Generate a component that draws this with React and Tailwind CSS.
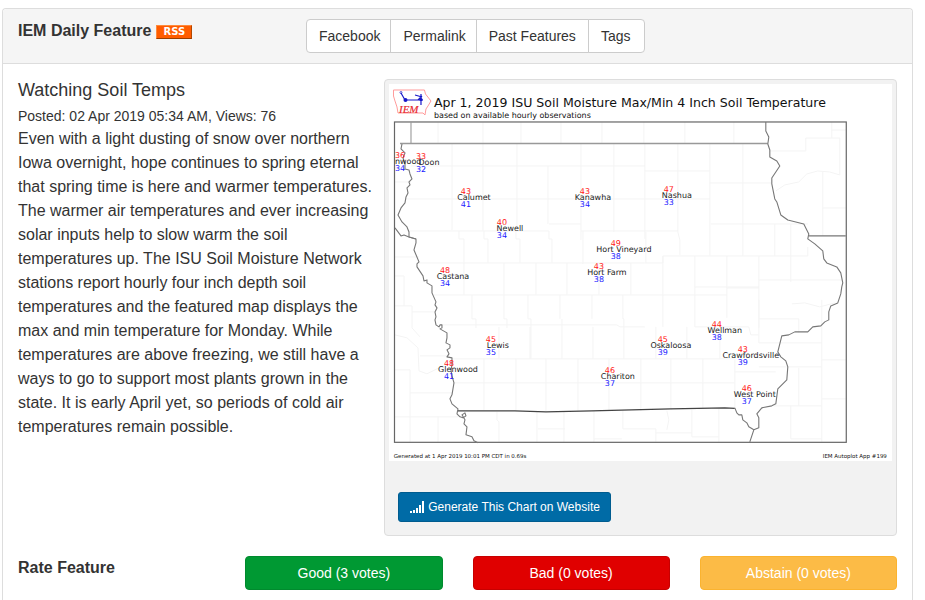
const links = [
  { label: "Facebook", pad: "pr-2.5" },
  { label: "Permalink", pad: "pr-2.5" },
  { label: "Past Features", pad: "pr-3" },
  { label: "Tags", pad: "pr-3.5" },
];

const stations = [
  { name: "nwood", x: 395, y: 164, anchor: "start", hi: 36, lo: 34, nx: 400 },
  { name: "Doon", x: 429, y: 165, hi: 33, lo: 32, nx: 421 },
  { name: "Calumet", x: 474, y: 200, hi: 43, lo: 41, nx: 466 },
  { name: "Newell", x: 510, y: 231, hi: 40, lo: 34, nx: 502 },
  { name: "Kanawha", x: 593, y: 200, hi: 43, lo: 34, nx: 585 },
  { name: "Nashua", x: 677, y: 198, hi: 47, lo: 33, nx: 669 },
  { name: "Hort Vineyard", x: 624, y: 252, hi: 49, lo: 38, nx: 616 },
  { name: "Hort Farm", x: 607, y: 275, hi: 43, lo: 38, nx: 599 },
  { name: "Castana", x: 453, y: 279, hi: 48, lo: 34, nx: 445 },
  { name: "Lewis", x: 498, y: 348, hi: 45, lo: 35, nx: 491 },
  { name: "Glenwood", x: 458, y: 372, hi: 48, lo: 41, nx: 449 },
  { name: "Chariton", x: 618, y: 379, hi: 46, lo: 37, nx: 610 },
  { name: "Oskaloosa", x: 671, y: 348, hi: 45, lo: 39, nx: 663 },
  { name: "Wellman", x: 725, y: 333, hi: 44, lo: 38, nx: 717 },
  { name: "Crawfordsville", x: 751, y: 358, hi: 43, lo: 39, nx: 743 },
  { name: "West Point", x: 755, y: 397, hi: 46, lo: 37, nx: 747 },
];

function SoilMap() {
  return (
    <svg
      viewBox="389 84 503 377"
      className="block w-full bg-white font-['DejaVu_Sans',sans-serif]"
      role="img"
      aria-label="Map of four inch soil temperatures in Iowa"
    >
      {/* county lines */}
      <g fill="none" stroke="#f4f4f4" strokeWidth="1">
        <path d="M438 122V143 M483 122V143 M521 122V143 M561 122V143 M602 122V143 M644 122V143 M685 122V143 M734 122V143" />
        <path d="M452 144V230 M483 144V231 M517 144V199V231 M581 144V240 M614 144V232 M645 144V239 M678 144V232 M710 144V256 M743 144V256" />
        <path d="M411 166H581V166H645 M645 171H710 M710 183H772 M395 182H411 M405 199H710 M548 166V224 M711 224H808 M581 231H678 M408 231H549 M549 224H581 M775 224V256" />
        <path d="M459 231V239H464V295 M484 231V239H488V263 M516 231V239H520V263 M549 231V239H552V263 M583 231V240V264 M646 232V263 M678 232L680 240V255 M645 263H663V256H808V247" />
        <path d="M419 263H645 M504 263V295 M536 263V295 M567 263V295 M599 263V295 M631 263V295 M663 256V327 M695 256V327 M727 256V318 M759 256V328 M791 224V282 M759 280H843 M759 288H727 M759 287H695" />
        <path d="M434 295H727 M472 295V319H476V328 M504 295V319H507V328 M528 295V319H531V359 M560 295V319 M592 295V319 M623 295V319H624V359 M645 327H620L617 325H440" />
        <path d="M499 327V359 M530 327V359 M562 319V359 M593 327V359 M656 327V359 M687 327V359 M695 327H749L751 335H759 M720 327V359 M735 359V408 M759 300V343H822" />
        <path d="M452 359H735 M484 359V410 M516 359V410 M546 359V411 M578 359V411 M609 359V411 M641 359V411 M671 359V410 M703 359V409 M454 383H735 M735 372H776 M759 319H799V333 M759 367H822" />
        <path d="M395 276H404V306 M395 257H419 M395 306H412V328L420 337 M412 312H434 M395 335L407 338L418 348L419 371L427 374L443 366 M420 356H447 M395 370H410V442 M410 393H452 M395 417H458 M438 417V442" />
        <path d="M497 412V420L499 422V442 M537 412V442 M538 429H565 M564 412V442 M594 411V442 M623 411V429H656 M594 439H622 M656 429V442 M667 411L669 420L667 430 M656 433H692 M692 410V437H719 M719 409V442" />
        <path d="M770 151H806V138H840V175L830 172L818 171L807 174L799 182L785 185L776 191 M832 122V138 M832 130H846 M823 172V236 M823 208H846 M822 300V442 M822 360H846 M822 399H846 M799 368V406 M774 406H822 M791 406V439H822 M792 304L805 303L820 307L835 303" />
      </g>
      {/* frame and state borders */}
      <rect x="394.5" y="122" width="452" height="320.5" fill="none" stroke="#666" strokeWidth="1.2" />
      <g fill="none" stroke="#777" strokeWidth="1.1" strokeLinejoin="round">
        <path d="M411 122V143.500" stroke="#999" />
        <path d="M400 143.500H768" stroke="#999" strokeWidth="1.4" />
        <path d="M809 236H846" />
        <path d="M402 144L401 149L405 153L403 158L405 163L405 169L409 170L410 174L412 179L409 182L410 185L407 188L408 193L406 197L405 203L401 208L398 215L402 222L407 227L409 232L409 237L416 239L416 243L414 250L419 262L417 264L417 267L423 276L424 281L427 280L427 283L432 286L432 293L436 302L435 305L437 308L435 312L436 317L435 320L436 325L439 327L440 325L442 325L442 328L440 329L447 333L447 338L446 343L450 345L450 348L447 350L449 354L447 357L452 358L452 365L451 370L452 376L454 383L453 389L452 395L450 399L452 404L458 409L457 414L460 417L463 418L466 416L465 413L462 415L465 420L464 424L467 427L466 435L472 437L474 441L478 443" />
        <path d="M395 228L401 236L404 235L409 237L416 239" />
        <path d="M766 122L766 131L769 137L768 144L770 150L770 157L777 161L780 166L776 172L772 178L772 184L775 199L777 202L781 215L788 220L804 224L809 234L808 239L815 244L823 251L824 259L827 263L837 267L841 273L843 283L842 287L841 294L838 303L831 306L829 312L829 320L825 322L821 326L813 327L808 332L795 332L789 335L782 336L780 344L778 352L781 357L786 361L788 367L787 380L778 389L776 404L772 406L762 408L757 414L759 418L759 428L754 430L750 442" />
        <path d="M458 411L515 411L546 412L592 411L671 409L725 408L735 408.500" stroke="#444" />
        <path d="M735 408L737 413L739 415L742 415L743 420L747 423L749 427L754 430" />
      </g>
      {/* logo */}
      <path d="M393.500 90H424.500L425.500 94L431 101L428 106L426 109L425 115L423 113L398 113L397 107L395 101L393.500 96Z" fill="#fff" stroke="#ff9b9b" strokeWidth="1" />
      <g stroke="#1717c8" strokeWidth="1.2" fill="none">
        <path d="M405 100H423M405 100L401 93M415 95L422 97M421 94V105M418 100L422 96" />
        <circle cx="401" cy="92.500" r="1" strokeWidth="0.700" />
      </g>
      <circle cx="405.500" cy="100" r="2" fill="#1717c8" />
      <circle cx="421" cy="99.500" r="1.600" fill="#1717c8" />
      <text x="399" y="113" fill="#e8292f" stroke="#e8292f" strokeWidth="0.2" fontSize="11" fontStyle="italic" className="font-['Liberation_Serif',serif]">IEM</text>

      <text x="434" y="118" fontSize="8" fill="#111">based on available hourly observations</text>
      <g fontSize="8" textAnchor="middle">
        {stations.map((s) => (
          <g key={s.name}>
            <text x={s.x} y={s.y} textAnchor={s.anchor} fill="#222">{s.name}</text>
            <text x={s.nx} y={s.y - 6} fill="#ff1515">{s.hi}</text>
            <text x={s.nx} y={s.y + 7} fill="#2020ff">{s.lo}</text>
          </g>
        ))}
      </g>
      {/* title and footer, on the chart's own 640x480 grid */}
      <svg x="389" y="84" width="503" height="377" viewBox="0 0 640 480" fill="#111">
        <text x="57" y="29" fontSize="16">Apr 1, 2019 ISU Soil Moisture Max/Min 4 Inch Soil Temperature</text>
        <text x="6" y="476" fontSize="7">Generated at 1 Apr 2019 10:01 PM CDT in 0.69s</text>
        <text x="634" y="476" fontSize="7" textAnchor="end">IEM Autoplot App #199</text>
      </svg>
    </svg>
  );
}

function SignalIcon() {
  return (
    <svg viewBox="0 0 14 12" className="h-3 w-3.5" fill="currentColor" aria-hidden="true">
      <path d="M0 10h2v2H0zM3 9h2v3H3zM6 7h2v5H6zM9 4h2v8H9zM12 0h2v12h-2z" />
    </svg>
  );
}

export default function App() {
  return (
    <main className="mr-3 ml-0.5 pt-2 font-['Liberation_Sans',Arial,sans-serif] text-base text-[#333]">
      <section className="rounded-t border border-b-0 border-[#ddd] bg-white">
        <header className="flex rounded-t border-b border-[#ddd] bg-[#f5f5f5] py-2.5">
          <div className="flex w-1/3 items-start gap-[5px] pl-[15px]">
            <h3 className="text-base leading-6 font-bold whitespace-nowrap">IEM Daily Feature</h3>
            <a
              href="#rss"
              className="mt-1.5 flex h-3.5 w-9 items-center justify-center border border-t-[#ff8a3c] border-r-[#b34700] border-b-[#993d00] border-l-[#ff8a3c] bg-[#ff5c00] font-['DejaVu_Sans',sans-serif] text-[10px] leading-3 font-bold text-white"
            >
              RSS
            </a>
          </div>
          <nav className="flex">
            {links.map(({ label, pad }) => (
              <a
                key={label}
                href="#feature"
                className={`-ml-px border border-[#ccc] bg-white py-1.5 pl-3 text-sm leading-5 first:ml-0 first:rounded-l last:rounded-r ${pad}`}
              >
                {label}
              </a>
            ))}
          </nav>
        </header>

        <div className="px-[15px] pt-[15px] pb-4">
          <div className="flex items-start gap-3">
            <article className="min-w-0 flex-1">
              <h4 className="text-lg leading-[22px]">Watching Soil Temps</h4>
              <p className="pt-1 text-[14px] leading-[22px]">Posted: 02 Apr 2019 05:34 AM, Views: 76</p>
              <p className="leading-6">
                Even with a light dusting of snow over northern Iowa overnight, hope continues to spring eternal that
                spring time is here and warmer temperatures. The warmer air temperatures and ever increasing solar
                inputs help to slow warm the soil temperatures up. The ISU Soil Moisture Network stations report hourly
                four inch depth soil temperatures and the featured map displays the max and min temperature for Monday.
                While temperatures are above freezing, we still have a ways to go to support most plants grown in the
                state. It is early April yet, so periods of cold air temperatures remain possible.
              </p>
            </article>
            <figure className="w-7/12 rounded border border-[#ddd] bg-[#f2f2f2] p-1">
              <SoilMap />
              <figcaption className="px-[9px] pt-[31px] pb-[9px]">
                <a
                  href="#chart"
                  className="inline-flex items-center gap-1 rounded-[3px] border border-[#005c8f] bg-[#006ba6] py-1.5 pr-2.5 pl-[11px] text-xs leading-4 text-white"
                >
                  <SignalIcon />
                  Generate This Chart on Website
                </a>
              </figcaption>
            </figure>
          </div>

          <div className="mt-5 grid grid-cols-4 gap-[30px] text-sm leading-5 text-white">
            <h3 className="text-base leading-6 font-bold text-[#333]">Rate Feature</h3>
            <button type="button" className="rounded border border-[#008a2e] bg-[#009933] px-3 py-1.5">Good (3 votes)</button>
            <button type="button" className="rounded border border-[#c70000] bg-[#e00000] px-3 py-1.5">Bad (0 votes)</button>
            <button type="button" className="rounded border border-[#fbb32f] bg-[#fcbb46] px-3 py-1.5">Abstain (0 votes)</button>
          </div>
        </div>
      </section>
    </main>
  );
}
